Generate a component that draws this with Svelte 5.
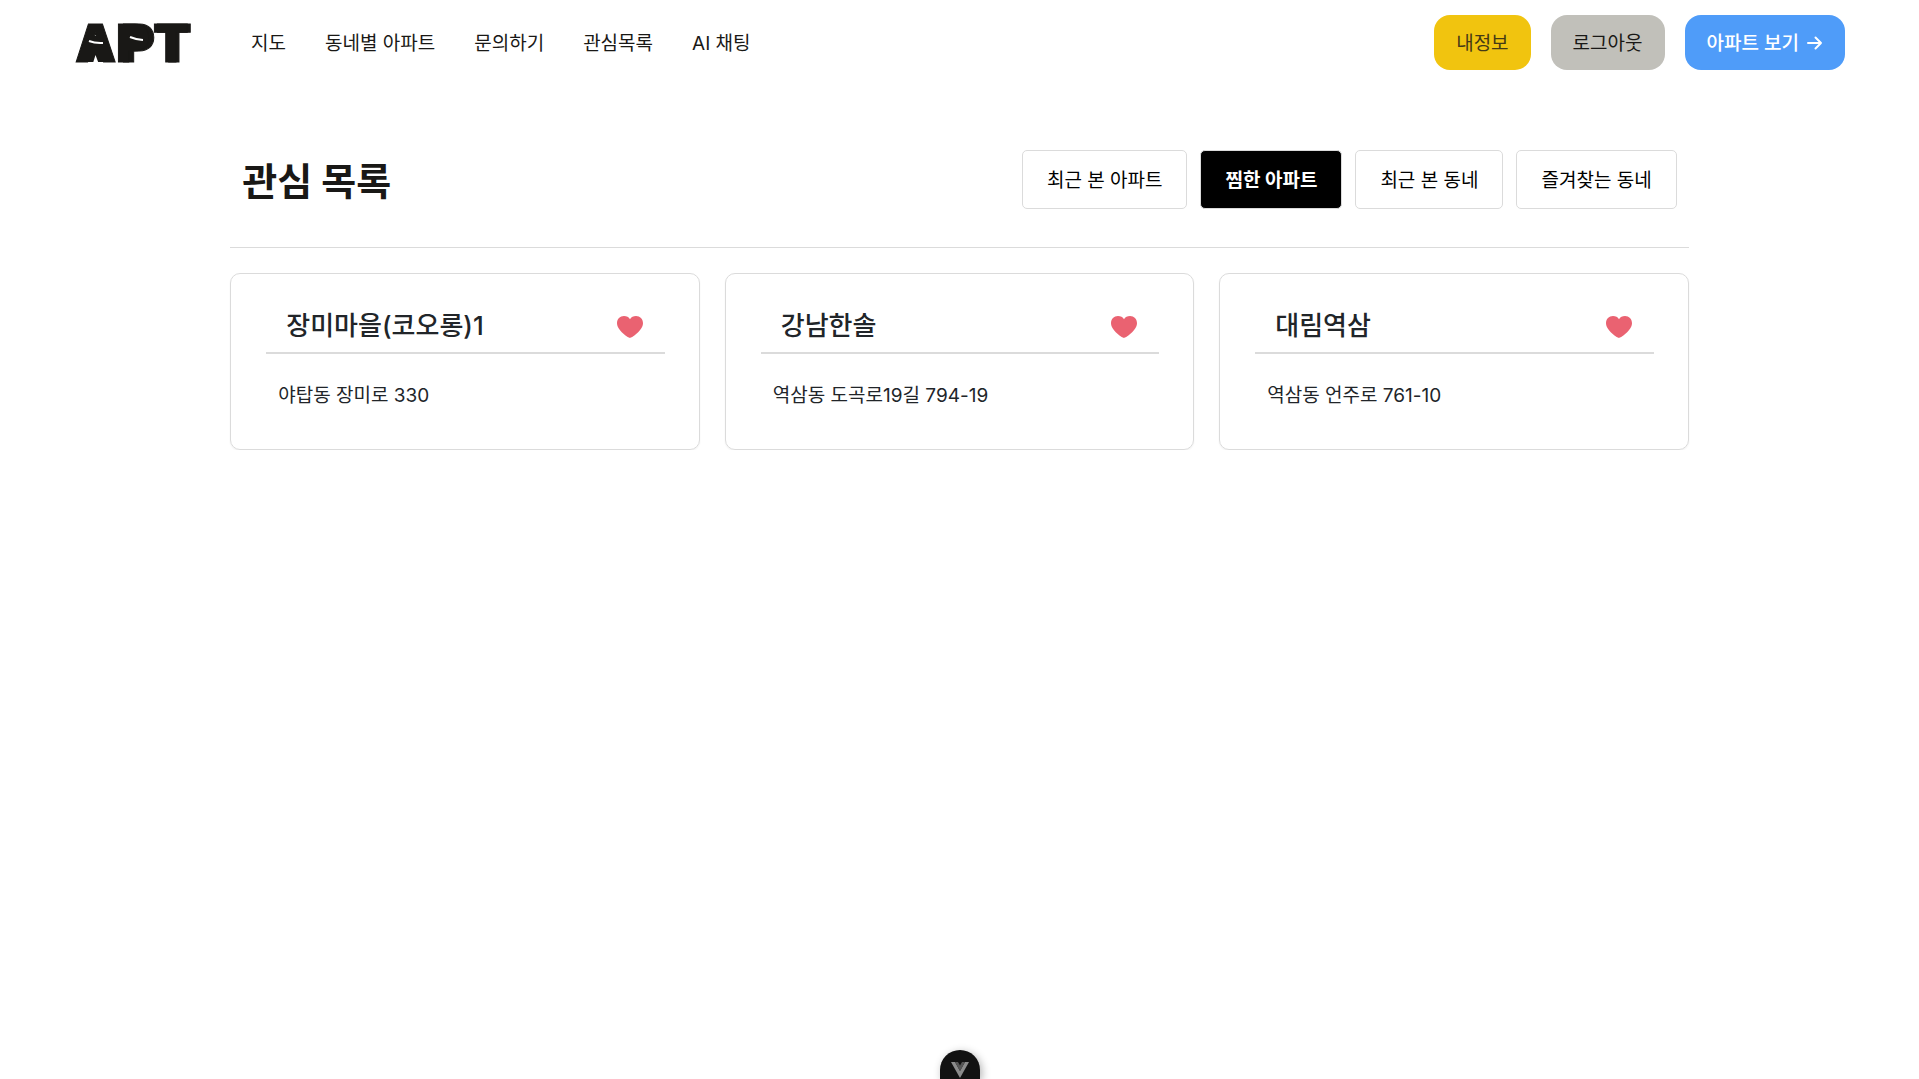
<script>
  const links = ['지도', '동네별 아파트', '문의하기', '관심목록', 'AI 채팅'];
  const tabs = ['최근 본 아파트', '찜한 아파트', '최근 본 동네', '즐겨찾는 동네'];
  const apartments = [
    { name: '장미마을(코오롱)1', address: '야탑동 장미로 330' },
    { name: '강남한솔', address: '역삼동 도곡로19길 794-19' },
    { name: '대림역삼', address: '역삼동 언주로 761-10' }
  ];
  let active = $state(1);
</script>

<header class="topbar">
  <a class="logo" href="#home" aria-label="APT">
    <svg width="124" height="66" viewBox="0 0 124 66">
      <text y="52" x="0">A</text>
      <text class="heavy" y="52" x="41">P</text>
      <text class="bold" y="52" x="78">T</text>
      <path class="fill" d="M14 26h14v15H14zM11 40h19v12H11zM53 21h13v17H53z" />
      <path class="notch" d="M18 53l2.500-8 3 8z" />
      <path class="shine" d="M14 31q6 2.500 14 2M55 27q6 2.500 13 3" />
    </svg>
  </a>
  <nav>
    {#each links as link}
      <a href="#nav">{link}</a>
    {/each}
  </nav>
  <div class="actions">
    <button class="action info">내정보</button>
    <button class="action logout">로그아웃</button>
    <button class="action view">
      아파트 보기
      <svg width="16" height="16" viewBox="0 0 16 16"><path d="M1 7h13M8.500 1.500L14 7l-5.500 5.500" /></svg>
    </button>
  </div>
</header>

<main>
  <div class="heading">
    <h1>관심 목록</h1>
    <div class="tabs">
      {#each tabs as tab, i}
        <button class="tab" class:active={active === i} onclick={() => (active = i)}>{tab}</button>
      {/each}
    </div>
  </div>
  <section class="cards">
    {#each apartments as apt}
      <article class="card">
        <div class="card-head">
          <h2>{apt.name}</h2>
          <button class="heart" aria-label="찜 해제">
            <svg width="26" height="22" viewBox="0 0 26 22">
              <path d="M13 22C11.500 22 0 14.500 0 7.300 0 3 3 0 7 0c2.600 0 4.800 1.200 6 3.200C14.200 1.200 16.400 0 19 0c4 0 7 3 7 7.300C26 14.500 14.500 22 13 22z" />
            </svg>
          </button>
        </div>
        <p>{apt.address}</p>
      </article>
    {/each}
  </section>
</main>

<button class="devtools" aria-label="Vue DevTools">
  <svg width="18" height="16" viewBox="0 0 18 16">
    <path fill="#8b8b8b" d="M0 0h4l5 9 5-9h4L9 16z" />
    <path fill="#565656" d="M4 0h3l2 3.500L11 0h3L9 9z" />
  </svg>
</button>

<style>
  :global(body) {
    background: #fff;
    color: #212529;
    font-family: Inter, 'Noto Sans CJK KR', sans-serif;
    font-size: 19px;
    line-height: 28px;
  }
  button {
    font: inherit;
    cursor: pointer;
  }
  .topbar {
    display: flex;
    align-items: center;
    height: 85px;
    padding: 0 74px 0 75px;
  }
  .logo {
    display: flex;
  }
  .logo text {
    font-family: Inter, sans-serif;
    font-size: 52px;
    font-weight: 900;
    fill: #191816;
    stroke: #191816;
    stroke-width: 1px;
  }
  .logo .heavy {
    filter: drop-shadow(5px 0 0 #191816);
  }
  .logo .bold {
    filter: drop-shadow(3px 0 0 #191816);
  }
  .fill {
    fill: #191816;
  }
  .notch {
    fill: #fff;
  }
  .shine {
    fill: none;
    stroke: #fff;
    stroke-width: 2;
  }
  nav {
    display: flex;
    gap: 39px;
    margin-left: 52px;
    padding-top: 2px;
  }
  nav a {
    color: #191816;
    text-decoration: none;
  }
  .actions {
    display: flex;
    gap: 20px;
    margin-left: auto;
  }
  .action {
    display: flex;
    align-items: center;
    gap: 8px;
    height: 55px;
    padding: 2px 22px 0;
    border: 0;
    border-radius: 16px;
    color: #191816;
  }
  .info {
    background: #f1c40f;
    color: #453a16;
  }
  .logout {
    background: #c1c0ba;
  }
  .view {
    background: #4f9cf9;
    color: #fff;
    font-weight: 500;
  }
  .view path {
    fill: none;
    stroke: #fff;
    stroke-width: 2;
    stroke-linecap: round;
    stroke-linejoin: round;
  }
  main {
    width: 76%;
    margin: 0 auto;
    padding-top: 65px;
  }
  .heading {
    display: flex;
    align-items: center;
    justify-content: space-between;
    padding: 0 12px 38px;
    border-bottom: 1px solid #dbdbdb;
  }
  h1 {
    margin: 0;
    padding-top: 2px;
    color: #191816;
    font-size: 38px;
    font-weight: 700;
    line-height: 50px;
  }
  .tabs {
    display: flex;
    gap: 13px;
  }
  .tab {
    height: 59px;
    padding: 2px 24px 0;
    border: 1px solid #dbdbdb;
    border-radius: 5px;
    background: #fff;
    color: #000;
  }
  .tab.active {
    background: #000;
    color: #fff;
    font-weight: 700;
  }
  .cards {
    display: grid;
    grid-template-columns: repeat(3, 1fr);
    gap: 25px;
    margin-top: 25px;
  }
  .card {
    padding: 32px 34px 39px 35px;
    border: 1px solid #dbdbdb;
    border-radius: 10px;
    box-shadow: 0 1px 2px rgb(0 0 0 / 6%);
  }
  .card-head {
    display: flex;
    align-items: center;
    justify-content: space-between;
    padding: 0 22px 6px 20px;
    border-bottom: 2px solid #dbdbdb;
  }
  h2 {
    margin: 0;
    font-size: 26px;
    font-weight: 500;
    line-height: 40px;
  }
  .heart {
    display: flex;
    padding: 2px 0 0;
    border: 0;
    background: none;
  }
  .heart path {
    fill: #ea6271;
  }
  p {
    margin: 28px 12px 0;
  }
  .devtools {
    position: fixed;
    bottom: 0;
    left: 50%;
    display: flex;
    justify-content: center;
    width: 40px;
    height: 29px;
    margin-left: -20px;
    padding: 12px 0 0;
    border: 0;
    border-radius: 20px 20px 0 0;
    background: #121212;
    box-shadow: 2px 2px 8px rgb(0 0 0 / 30%);
  }
</style>
